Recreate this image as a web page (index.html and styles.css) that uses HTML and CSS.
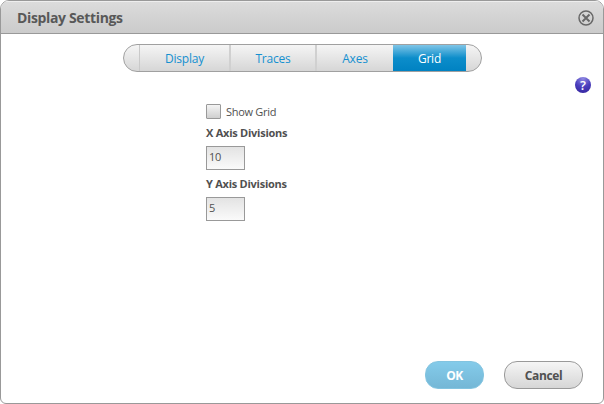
FILE: index.html
```html
<!DOCTYPE html>
<html lang="en">
<head>
<meta charset="utf-8">
<title>Display Settings</title>
<link rel="stylesheet" href="styles.css">
</head>
<body>
<section class="dialog">
  <header class="titlebar">
    <h1><span>Display Settings</span></h1>
    <button class="close" aria-label="Close">
      <svg width="16" height="16" viewBox="0 0 16 16" fill="none" stroke="#686868"><circle cx="8" cy="8" r="7" stroke-width="1.5"/><path d="M4.5 4.5l7 7M11.5 4.5l-7 7" stroke-width="2"/></svg>
    </button>
  </header>
  <main class="content">
    <nav class="tabs">
      <a class="display">Display</a>
      <a class="traces">Traces</a>
      <a class="axes">Axes</a>
      <a class="grid">Grid</a>
    </nav>
    <div class="help-row"><button class="help" aria-label="Help">?</button></div>
    <form class="fields">
      <label class="check"><i class="box"></i><span>Show Grid</span></label>
      <label class="name" for="x">X Axis Divisions</label>
      <input id="x" value="10">
      <label class="name" for="y">Y Axis Divisions</label>
      <input id="y" value="5">
    </form>
  </main>
  <footer class="actions">
    <button class="btn ok">OK</button>
    <button class="btn cancel">Cancel</button>
  </footer>
</section>
</body>
</html>
```
FILE: styles.css
```css
* { box-sizing: border-box; }
body {
  margin: 0;
  background: #fff;
  font-family: "Open Sans", "Noto Sans", sans-serif;
  font-size: 11px;
  color: #505050;
}
button { padding: 0; border: 0; font-family: inherit; }
.dialog {
  width: 604px;
  height: 404px;
  display: flex;
  flex-direction: column;
  border: 1px solid #999;
  border-radius: 9px 9px 6px 6px;
  background: #fff;
  overflow: hidden;
}
.titlebar {
  height: 33px;
  flex: none;
  display: flex;
  align-items: center;
  justify-content: space-between;
  padding: 0 9px 0 16px;
  border-bottom: 1px solid #999;
  background: linear-gradient(#dcdcdc, #cbcbcb);
  box-shadow: inset 0 1px #eee;
}
h1 { margin: 2px 0 0; font-size: 14px; line-height: 18px; letter-spacing: -0.35px; color: #585858; }
.close { width: 16px; height: 16px; margin-top: 1px; background: none; }
.close svg { display: block; }
.content { flex: 1; padding-top: 10px; }
.tabs {
  width: 359px;
  height: 28px;
  margin-left: 122px;
  padding: 0 15px;
  display: flex;
  border: 1px solid #a0a0a0;
  border-radius: 14px;
  background: linear-gradient(#f5f5f5, #d6d6d6);
}
.tabs a {
  height: 26px;
  border-left: 1px solid #c9c9c9;
  color: #1590d0;
  font-size: 12px;
  line-height: 28px;
  letter-spacing: -0.2px;
  text-align: center;
}
.tabs .display { width: 90px; }
.tabs .traces { width: 86px; border-left: 2px solid #d0d0d0; }
.tabs .axes { width: 78px; border-left: 2px solid #d0d0d0; }
.tabs .grid {
  width: 73px;
  border: 0;
  color: #fff;
  background: linear-gradient(#7fc5e7, #0c8dca 50%, #0082c2);
}
.help-row { display: flex; justify-content: flex-end; padding: 5px 12px 0 0; }
.help {
  width: 16px;
  height: 16px;
  border-radius: 50%;
  background: radial-gradient(circle at 50% 10%, #8f88e2, #4b3fbd 50%, #30209a);
  color: #fff;
  font-size: 13px;
  font-weight: 600;
  line-height: 17px;
}
.fields {
  display: flex;
  flex-direction: column;
  align-items: flex-start;
  padding: 10px 0 0 205px;
}
.check { display: flex; align-items: center; gap: 5px; height: 16px; letter-spacing: -0.3px; }
.box {
  width: 15px;
  height: 15px;
  border: 1px solid #999;
  border-radius: 1px;
  background: linear-gradient(#f4f4f4, #cfcfcf);
}
.name { height: 15px; margin-top: 6px; font-weight: 700; line-height: 15px; letter-spacing: -0.25px; }
.fields input {
  width: 39px;
  height: 24px;
  margin: 6px 0 0;
  padding: 0 2px 3px;
  border: 1px solid #999;
  border-radius: 0;
  background: linear-gradient(#e3e3e3, #fafafa);
  color: #505050;
  font: inherit;
  letter-spacing: -0.2px;
}
.actions { display: flex; gap: 20px; justify-content: flex-end; padding: 0 20px 14px 0; }
.btn {
  height: 28px;
  border-radius: 13px;
  font-size: 12px;
  font-weight: 700;
  letter-spacing: -0.4px;
}
.ok { width: 59px; border: 1px solid #83c4e0; background: linear-gradient(#84cbea, #74b7d6); color: #fff; }
.cancel { width: 79px; border: 1px solid #999; background: linear-gradient(#f5f5f5, #d6d6d6); color: #505050; }
```
